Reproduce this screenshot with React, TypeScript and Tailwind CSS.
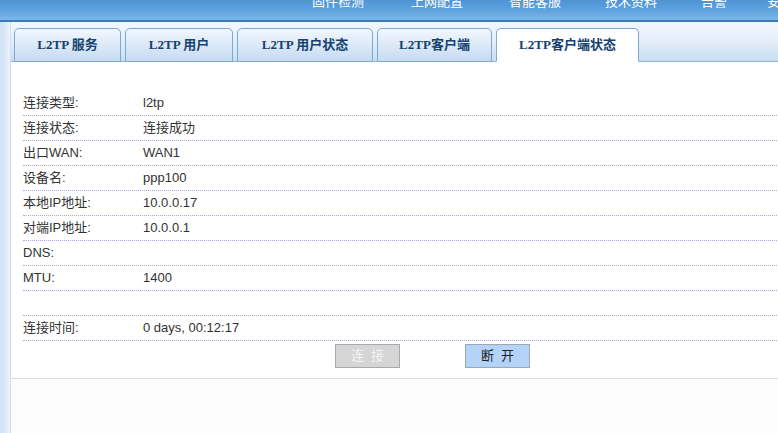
const navItems = [
  { label: "固件检测", gap: "mr-[47px]" },
  { label: "上网配置", gap: "mr-[46px]" },
  { label: "智能客服", gap: "mr-[44px]" },
  { label: "技术资料", gap: "mr-[44px]" },
  { label: "告警", gap: "mr-[40px]" },
  { label: "安全", gap: "" },
];

const tabs = [
  { label: "L2TP 服务", width: "w-[107px]" },
  { label: "L2TP 用户", width: "w-[108px]" },
  { label: "L2TP 用户状态", width: "w-[136px]" },
  { label: "L2TP客户端", width: "w-[115px]" },
  { label: "L2TP客户端状态", width: "w-[143px]", active: true },
];

const rows = [
  { label: "连接类型:", value: "l2tp" },
  { label: "连接状态:", value: "连接成功" },
  { label: "出口WAN:", value: "WAN1" },
  { label: "设备名:", value: "ppp100" },
  { label: "本地IP地址:", value: "10.0.0.17" },
  { label: "对端IP地址:", value: "10.0.0.1" },
  { label: "DNS:", value: "" },
  { label: "MTU:", value: "1400" },
  { label: "", value: "" },
  { label: "连接时间:", value: "0 days, 00:12:17" },
];

export default function App() {
  return (
    <div className="relative h-[433px] w-[778px] overflow-hidden bg-[#fdfdfd] font-['Liberation_Sans','Noto_Sans_CJK_SC',sans-serif] text-[13px] text-[#333]">
      <header className="h-[22px] overflow-hidden border-b-2 border-[#3a78b8] bg-gradient-to-b from-[#4f93d4] via-[#5ea3de] to-[#7cb7e8]">
        <nav className="-mt-[5px] flex pl-[312px] leading-[14px] text-white">
          {navItems.map((item) => (
            <span key={item.label} className={`shrink-0 ${item.gap}`}>
              {item.label}
            </span>
          ))}
        </nav>
      </header>

      <div className="flex h-[411px]">
        <div className="w-[11px] shrink-0 border-r border-[#d6dde6] bg-gradient-to-r from-[#cfe2f7] via-[#d9e8f9] to-[#eef4fb]" />

        <div className="w-[800px] shrink-0">
          <div className="flex h-[40px] items-end gap-1 border-b border-[#93b3d6] bg-gradient-to-b from-[#f3f7fc] via-[#e3eef9] to-[#c9ddf3] pl-[3px]">
            {tabs.map((tab) => (
              <div
                key={tab.label}
                className={`${tab.width} -mb-px flex h-[34px] items-center justify-center rounded-t-[5px] border border-[#7fa8d4] font-['Liberation_Serif','Noto_Sans_CJK_SC',serif] text-[13px] font-bold text-[#17426f] ${
                  tab.active
                    ? "border-b-white bg-white"
                    : "bg-gradient-to-b from-[#f2f7fd] to-[#c6dbf1]"
                }`}
              >
                {tab.label}
              </div>
            ))}
          </div>

          <div className="h-[317px] border-b border-[#d8dce1] bg-white pt-[29px]">
            {rows.map((row, i) => (
              <div
                key={i}
                className="ml-[12px] flex h-[25px] items-center border-b border-dotted border-[#a9a6e6]"
              >
                <span className="w-[120px] shrink-0">{row.label}</span>
                <span>{row.value}</span>
              </div>
            ))}

            <div className="mt-[3px] flex gap-[65px] pl-[324px]">
              <button
                type="button"
                disabled
                className="h-[24px] w-[65px] border border-[#a9a9a9] bg-[#d5d5d5] text-[13px] text-[#f4f4f4]"
              >
                连&nbsp;&nbsp;接
              </button>
              <button
                type="button"
                className="h-[24px] w-[65px] border border-[#9fa7b6] bg-[#b3d4f8] text-[13px] text-[#222]"
              >
                断&nbsp;&nbsp;开
              </button>
            </div>
          </div>
        </div>
      </div>
    </div>
  );
}
